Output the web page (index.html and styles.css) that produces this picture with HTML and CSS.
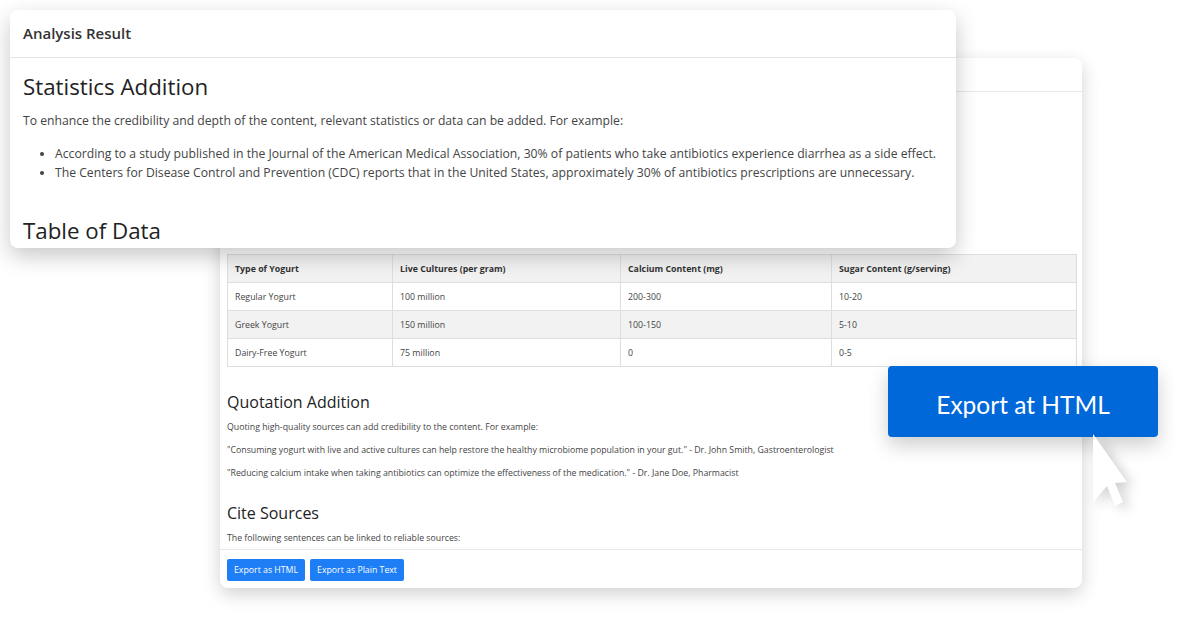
FILE: index.html
```html
<!DOCTYPE html>
<html>
<head>
<meta charset="utf-8">
<link rel="stylesheet" href="styles.css">
</head>
<body>
<div class="stage">
  <div class="card back">
    <div class="back-head"></div>
    <div class="back-body">
      <table class="data">
        <thead>
          <tr><th>Type of Yogurt</th><th>Live Cultures (per gram)</th><th>Calcium Content (mg)</th><th>Sugar Content (g/serving)</th></tr>
        </thead>
        <tbody>
          <tr><td>Regular Yogurt</td><td>100 million</td><td>200-300</td><td>10-20</td></tr>
          <tr><td>Greek Yogurt</td><td>150 million</td><td>100-150</td><td>5-10</td></tr>
          <tr><td>Dairy-Free Yogurt</td><td>75 million</td><td>0</td><td>0-5</td></tr>
        </tbody>
      </table>
      <h3 class="sub">Quotation Addition</h3>
      <p class="small">Quoting high-quality sources can add credibility to the content. For example:</p>
      <p class="small">"Consuming yogurt with live and active cultures can help restore the healthy microbiome population in your gut." - Dr. John Smith, Gastroenterologist</p>
      <p class="small">"Reducing calcium intake when taking antibiotics can optimize the effectiveness of the medication." - Dr. Jane Doe, Pharmacist</p>
      <h3 class="sub cite">Cite Sources</h3>
      <p class="small">The following sentences can be linked to reliable sources:</p>
    </div>
    <div class="back-foot">
      <button class="btn">Export as HTML</button>
      <button class="btn">Export as Plain Text</button>
    </div>
  </div>

  <div class="card front">
    <div class="front-head">Analysis Result</div>
    <div class="front-body">
      <h2 class="title">Statistics Addition</h2>
      <p class="lead">To enhance the credibility and depth of the content, relevant statistics or data can be added. For example:</p>
      <ul class="list">
        <li>According to a study published in the Journal of the American Medical Association, 30% of patients who take antibiotics experience diarrhea as a side effect.</li>
        <li>The Centers for Disease Control and Prevention (CDC) reports that in the United States, approximately 30% of antibiotics prescriptions are unnecessary.</li>
      </ul>
      <h2 class="title table-title">Table of Data</h2>
    </div>
  </div>

  <div class="callout">Export at HTML</div>
  <svg class="cursor" width="40" height="76" viewBox="0 0 40 76">
    <path d="M2 2 L2 70 L16 54 L24 74 L32 70 L24 51 L36 50 Z" fill="#ffffff"/>
  </svg>
</div>
</body>
</html>
```

FILE: styles.css
```css
* { box-sizing: border-box; }
html, body { margin: 0; padding: 0; background: #ffffff; }
body { font-family: "Open Sans", "Noto Sans", sans-serif; color: #333; }
.stage { position: relative; width: 1182px; height: 619px; overflow: hidden; background: #fff; }

.card { position: absolute; background: #fff; border-radius: 8px; overflow: hidden; }

.back { left: 220px; top: 58px; width: 862px; height: 530px; display: flex; flex-direction: column;
  box-shadow: 0 6px 18px rgba(0,0,0,0.18); }
.back-head { height: 34px; border-bottom: 1px solid #e8e8e8; flex: none; }
.back-body { flex: 1; min-height: 0; overflow: hidden; padding: 162px 5px 0 7px; }
.data { width: 100%; border-collapse: collapse; font-size: 8.8px; color: #444; }
.data th, .data td { border: 1px solid #dedede; height: 28px; padding: 0 7px; text-align: left; }
.data th { background: #f2f2f2; font-weight: 700; color: #333; }
.data tbody tr:nth-child(2) td { background: #f2f2f2; }
.data th:nth-child(1) { width: 165px; }
.data th:nth-child(2) { width: 228px; }
.data th:nth-child(3) { width: 211px; }
.sub { font-size: 16px; font-weight: 500; margin: 24px 0 9px; color: #222; line-height: 22px; }
.cite { margin-top: 23px; margin-bottom: 9px; }
.small { font-size: 8.75px; margin: 0 0 12px; line-height: 11px; color: #444; white-space: nowrap; }
.back-foot { height: 39px; border-top: 1px solid #e8e8e8; flex: none; padding: 9px 7px; display: flex; gap: 5px; align-items: flex-start; }
.btn { height: 22px; border: none; border-radius: 2px; background: #1e7ef5; color: #fff; font-family: inherit; font-size: 8.75px; padding: 0 7px; line-height: 22px; }

.front { left: 10px; top: 10px; width: 946px; height: 238px;
  box-shadow: 0 8px 22px rgba(0,0,0,0.22); }
.front-head { height: 48px; border-bottom: 1px solid #e3e3e3; padding: 0 13px 2px; display: flex; align-items: center; font-size: 15px; font-weight: 600; color: #333; }
.front-body { padding: 0 13px; }
.title { font-size: 22.3px; font-weight: 500; margin: 16px 0 12px; line-height: 26px; color: #222; }
.lead { font-size: 12.2px; margin: 0 0 14px; line-height: 18px; color: #444; }
.list { margin: 0; padding-left: 32px; font-size: 12.2px; line-height: 19px; color: #444; white-space: nowrap; }
.table-title { margin-top: 36px; }

.callout { position: absolute; left: 888px; top: 366px; width: 270px; height: 71px; background: #0068d9; border-radius: 4px;
  color: #fff; font-size: 24.5px; display: flex; align-items: center; justify-content: center; font-family: "Lato", sans-serif; padding-top: 6px;
  box-shadow: 0 8px 20px rgba(0,0,0,0.2); }
.cursor { position: absolute; left: 1091px; top: 432px; filter: drop-shadow(6px 4px 6px rgba(0,0,0,0.18)); }
```
